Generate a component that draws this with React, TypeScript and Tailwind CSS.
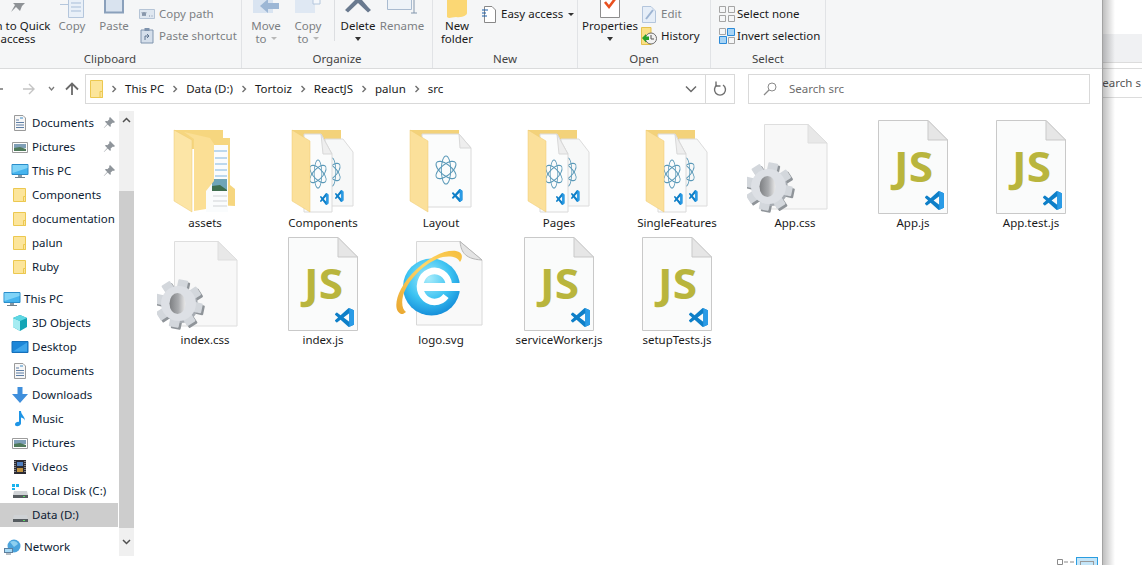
import type { ReactNode } from "react";

const VSCODE =
  "M23.15 2.587L18.21.21a1.494 1.494 0 0 0-1.705.29l-9.46 8.63-4.12-3.128a.999.999 0 0 0-1.276.057L.327 7.261A1 1 0 0 0 .326 8.74L3.899 12 .326 15.26a1 1 0 0 0 .001 1.479L1.65 17.94a.999.999 0 0 0 1.276.057l4.12-3.128 9.46 8.63a1.492 1.492 0 0 0 1.704.29l4.942-2.377A1.5 1.5 0 0 0 24 20.06V3.939a1.5 1.5 0 0 0-.85-1.352zm-5.146 14.861L10.826 12l7.178-5.448v10.896z";

// --- big icons, all drawn on a 96x96 canvas ---

function VsLogo({ x, y, size, sx = 1 }: { x: number; y: number; size: number; sx?: number }) {
  return (
    <g transform={`translate(${x} ${y}) scale(${(size / 24) * sx} ${size / 24})`}>
      <path d={VSCODE} fill="#0e7fc8" />
      <path d="M18 0.2L18.2 0.2L23.15 2.587A1.5 1.5 0 0 1 24 3.94V20.06a1.5 1.5 0 0 1-.85 1.352L18.2 23.8L18 23.8V17.4V6.6z" fill="#2a9be6" />
    </g>
  );
}

function Page({ x, y, w, h, fold }: { x: number; y: number; w: number; h: number; fold: number }) {
  const r = x + w;
  const b = y + h;
  return (
    <g>
      <path d={`M${x + 0.5} ${y + 0.5}H${r - fold}L${r - 0.5} ${y + fold}V${b - 0.5}H${x + 0.5}z`} fill="#fafbfb" stroke="#c9c9c9" />
      <path d={`M${r - fold} ${y + 0.5}V${y + fold}H${r - 0.5}z`} fill="#e6e6e6" stroke="#c9c9c9" />
    </g>
  );
}

function Atom({ x, y, r, sx }: { x: number; y: number; r: number; sx: number }) {
  return (
    <g fill="none" stroke="#5a99b8" strokeWidth="1.2" transform={`translate(${x} ${y}) scale(${sx} 1)`}>
      <ellipse rx={r * 0.42} ry={r} />
      <ellipse rx={r * 0.42} ry={r} transform="rotate(60)" />
      <ellipse rx={r * 0.42} ry={r} transform="rotate(120)" />
    </g>
  );
}

function Canvas({ children }: { children: ReactNode }) {
  return (
    <svg width="96" height="96" viewBox="0 0 96 96" className="shrink-0">
      {children}
    </svg>
  );
}

function FolderBack() {
  return <path d="M17 11H66V30H17z" fill="#f3d27a" />;
}

function FolderFlap() {
  return <path d="M17 11L35 22V93L17 82z" fill="#fbe09a" stroke="#efcb72" strokeWidth="0.5" />;
}

function AssetsFolder() {
  return (
    <Canvas>
      <path d="M17 11H66V19H73V66L78 70V87L58 86V30H17z" fill="#f6d67f" />
      <path d="M49 26H71V93H49z" fill="#fafcfd" />
      <g stroke="#7fb4de" strokeWidth="1">
        <path d="M56 32H70M58 39H70M58 45H70M58 51H70M58 57H70" />
      </g>
      <path d="M55 60H70V72H55z" fill="#6fa5b8" />
      <path d="M55 67L63 66L70 71V72H55z" fill="#3f6f4f" />
      <g stroke="#d0d3d6" strokeWidth="1">
        <path d="M56 77H70M56 82H70M56 87H70" />
      </g>
      <path d="M27 13L53 19L57 25V62L49 72V90L37 92V20z" fill="#fbdf95" />
      <path d="M17 11L35 21V93L17 82z" fill="#fce5a6" stroke="#efcb72" strokeWidth="0.5" />
    </Canvas>
  );
}

function TwoPageFolder() {
  return (
    <Canvas>
      <FolderBack />
      <path d="M50 20H68L78 33V87H50z" fill="#f7f8f8" stroke="#dcdcdc" />
      <Atom x={57} y={53} r={14} sx={0.65} />
      <VsLogo x={60} y={71} size={12} sx={0.7} />
      <path d="M29 15H46L57 35V93H29z" fill="#fbfcfc" stroke="#dadada" />
      <path d="M46 15L48 35H57z" fill="#eeeeee" stroke="#d8d8d8" />
      <Atom x={43} y={55} r={14} sx={0.65} />
      <VsLogo x={45} y={74} size={12} sx={0.7} />
      <FolderFlap />
    </Canvas>
  );
}

function OnePageFolder() {
  return (
    <Canvas>
      <FolderBack />
      <path d="M29 15H66L78 29V88H29z" fill="#fbfcfc" stroke="#dadada" />
      <path d="M66 15L67 29H78z" fill="#eeeeee" stroke="#d8d8d8" />
      <Atom x={53} y={51} r={14} sx={0.8} />
      <VsLogo x={59} y={70} size={13} sx={0.8} />
      <FolderFlap />
    </Canvas>
  );
}

function JsFile() {
  return (
    <Canvas>
      <Page x={13} y={1} w={70} h={94} fold={20} />
      <text x={29} y={63} fontFamily="'Open Sans', sans-serif" fontWeight="700" fontSize="41" fill="#b9b53d" textLength={39} lengthAdjust="spacingAndGlyphs">
        JS
      </text>
      <VsLogo x={60} y={72} size={19} />
    </Canvas>
  );
}

function CssFile() {
  const teeth = [0, 45, 90, 135, 180, 225, 270, 315];
  return (
    <Canvas>
      <defs>
        <linearGradient id="gearhole" x1="0" y1="0" x2="1" y2="0">
          <stop offset="0" stopColor="#7d7f82" />
          <stop offset="0.55" stopColor="#a8aaad" />
          <stop offset="1" stopColor="#e9e9e9" />
        </linearGradient>
      </defs>
      <path d="M17.5 5.5H61L80 24V90H17.5z" fill="#f8f8f8" stroke="#dedede" />
      <path d="M61 5.5V24H80z" fill="#e8e8e8" stroke="#dedede" />
      <g transform="translate(23.5 69.5)">
        {teeth.map((a) => (
          <rect key={a} x="-5" y="-24" width="10" height="12" rx="1" fill="#8f9499" transform={`rotate(${a + 12})`} />
        ))}
        <circle r="17.5" fill="#a6abb1" />
      </g>
      <g transform="translate(21.5 67.5)">
        {teeth.map((a) => (
          <rect key={a} x="-5" y="-24" width="10" height="12" rx="1" fill="#d3d7dc" transform={`rotate(${a + 12})`} />
        ))}
        <circle r="17.5" fill="#dde0e5" />
        <ellipse cx="-1" cy="0" rx="8" ry="10.5" fill="url(#gearhole)" />
      </g>
    </Canvas>
  );
}

function IeFile() {
  return (
    <Canvas>
      <defs>
        <radialGradient id="iebl" cx="45%" cy="35%" r="70%">
          <stop offset="0" stopColor="#a8ecfb" />
          <stop offset="0.55" stopColor="#3cc3f2" />
          <stop offset="1" stopColor="#0f86d6" />
        </radialGradient>
        <linearGradient id="ieor" x1="0" y1="1" x2="1" y2="0">
          <stop offset="0" stopColor="#e9a62e" />
          <stop offset="0.6" stopColor="#ffd76a" />
          <stop offset="1" stopColor="#f5bd3a" />
        </linearGradient>
      </defs>
      <path d="M23.5 5.5H67L89 24V89H23.5z" fill="#f9f9f9" stroke="#d8d8d8" />
      <path d="M67 5.5C68 14 70 23 89 24z" fill="#e4e4e4" stroke="#b5b5b5" />
      <circle cx="38.5" cy="51" r="28.5" fill="url(#iebl)" />
      <path d="M56 49A14.5 15.5 0 1 0 53 60" fill="none" stroke="#ffffff" strokeWidth="6.5" />
      <path d="M28 47H67V55H28z" fill="#ffffff" />
      <path d="M10 78C2 78 1 66 8 53C18 34 44 13 63 15C70 16 70 22 67 26C64 20 54 19 44 23C28 30 14 46 10 60C8 68 10 74 13 76z" fill="url(#ieor)" />
    </Canvas>
  );
}

const files: { name: string; icon: ReactNode }[] = [
  { name: "assets", icon: <AssetsFolder /> },
  { name: "Components", icon: <TwoPageFolder /> },
  { name: "Layout", icon: <OnePageFolder /> },
  { name: "Pages", icon: <TwoPageFolder /> },
  { name: "SingleFeatures", icon: <TwoPageFolder /> },
  { name: "App.css", icon: <CssFile /> },
  { name: "App.js", icon: <JsFile /> },
  { name: "App.test.js", icon: <JsFile /> },
  { name: "index.css", icon: <CssFile /> },
  { name: "index.js", icon: <JsFile /> },
  { name: "logo.svg", icon: <IeFile /> },
  { name: "serviceWorker.js", icon: <JsFile /> },
  { name: "setupTests.js", icon: <JsFile /> },
];

// --- sidebar icons, 18x16 ---

function Small({ children }: { children: ReactNode }) {
  return (
    <svg width="18" height="16" viewBox="0 0 18 16" className="shrink-0">
      {children}
    </svg>
  );
}

const FolderIcon = () => (
  <Small>
    <path d="M2.5 1.5H14.5V14.5H2.5z" fill="#fce59b" stroke="#ecc850" />
    <path d="M12.5 9.5H14.5V14.5H12.5z" fill="#fce59b" stroke="#ecc850" />
  </Small>
);
const DocIcon = () => (
  <Small>
    <path d="M3.5 .5H12L14.5 3V15.5H3.5z" fill="#f7f7f7" stroke="#9a9a9a" />
    <path d="M5 5H8M5 7.5H13M5 10H13M5 12.5H13" stroke="#5f7fa5" />
    <path d="M9 3H12" stroke="#3d8cc9" />
  </Small>
);
const PicIcon = () => (
  <Small>
    <path d="M1.5 3.5H16.5V13.5H1.5z" fill="#fff" stroke="#9c9c9c" />
    <path d="M3 5H15V9H3z" fill="#7f9fb7" />
    <path d="M3 9L9 8L15 10V12H3z" fill="#4f7a5a" />
  </Small>
);
const PcIcon = () => (
  <Small>
    <path d="M1 1.5H17V11.5H1z" fill="#46b4ee" stroke="#2a8dc9" />
    <path d="M1.5 2H16.5V5L1.5 10z" fill="#7fd3f7" />
    <path d="M7 12H11V14H7z" fill="#8a9aa5" />
    <path d="M4 14H14V15H4z" fill="#6f7f8a" />
  </Small>
);
const CubeIcon = () => (
  <Small>
    <path d="M9 0L16 3V12L9 16L2 12V3z" fill="#14a5b5" />
    <path d="M2 3L9 6V16L2 12z" fill="#a5ecf2" />
    <path d="M9 0L16 3L9 6L2 3z" fill="#5fd7e3" />
  </Small>
);
const DesktopIcon = () => (
  <Small>
    <path d="M1 2.5H17V13.5H1z" fill="#1c86d8" stroke="#1670ba" />
    <path d="M2 12.5L16 3.5V12.5z" fill="#3ea5ea" />
  </Small>
);
const DownloadIcon = () => (
  <Small>
    <path d="M6.5 0H11.5V7H17L9 16L1 7H6.5z" fill="#3f8fdc" />
  </Small>
);
const MusicIcon = () => (
  <Small>
    <path d="M8 0H10C10 4 14 5 14 10C14 8 12 7 10 6.5V12.5C10 15 4 16.5 4 13.5C4 11.5 6.5 10.5 8 11z" fill="#1e95e6" />
  </Small>
);
const VideoIcon = () => (
  <Small>
    <path d="M3 1H15V15H3z" fill="#2b2b33" />
    <path d="M6 3H12V7H6z" fill="#4f7fc0" />
    <path d="M6 9H12V13H6z" fill="#c0923f" />
    <path d="M4 2V14M14 2V14" stroke="#d8d8d8" strokeDasharray="1 1" />
  </Small>
);
const DiskCIcon = () => (
  <Small>
    <path d="M1 1H4V4H1zM5 1H8V4H5zM1 5H4V7H1z" fill="#19b3ee" />
    <path d="M3 8H16L17 12H2z" fill="#d0d3d6" />
    <path d="M2 12H17V15H2z" fill="#565c60" />
    <path d="M12 13H14V14H12z" fill="#58e060" />
  </Small>
);
const DiskDIcon = () => (
  <Small>
    <path d="M3 8H16L17 12H2z" fill="#cfd2d5" />
    <path d="M2 12H17V15H2z" fill="#565c60" />
    <path d="M12 13H14V14H12z" fill="#58e060" />
  </Small>
);
const NetworkIcon = () => (
  <Small>
    <circle cx="11" cy="7" r="6.5" fill="#4aa3dc" />
    <path d="M7 3C10 1 14 2 15 5L11 8z" fill="#8ed0f0" />
    <path d="M1 9H10V14H1z" fill="#5c7f9f" />
    <path d="M2 10H9V13H2z" fill="#a5d9f5" />
    <path d="M3 15H8" stroke="#6f7f8a" />
  </Small>
);
const PinIcon = () => (
  <svg width="12" height="12" viewBox="0 0 12 12" className="shrink-0">
    <path d="M7 0L12 5L10.8 6L10 5.4L7.6 7.6C8 8.6 7.8 9.5 7.2 10L4.6 7.4L1 11L.8 10.8L4.2 7L1.8 4.6C2.4 4 3.4 3.8 4.4 4.2L6.6 2L6 1.2z" fill="#8f959b" />
  </svg>
);

type Row = { label: string; icon: ReactNode; top?: boolean; pin?: boolean; active?: boolean; gap?: boolean };

const rows: Row[] = [
  { label: "Documents", icon: <DocIcon />, pin: true },
  { label: "Pictures", icon: <PicIcon />, pin: true },
  { label: "This PC", icon: <PcIcon />, pin: true },
  { label: "Components", icon: <FolderIcon /> },
  { label: "documentation", icon: <FolderIcon /> },
  { label: "palun", icon: <FolderIcon /> },
  { label: "Ruby", icon: <FolderIcon /> },
  { label: "This PC", icon: <PcIcon />, top: true, gap: true },
  { label: "3D Objects", icon: <CubeIcon /> },
  { label: "Desktop", icon: <DesktopIcon /> },
  { label: "Documents", icon: <DocIcon /> },
  { label: "Downloads", icon: <DownloadIcon /> },
  { label: "Music", icon: <MusicIcon /> },
  { label: "Pictures", icon: <PicIcon /> },
  { label: "Videos", icon: <VideoIcon /> },
  { label: "Local Disk (C:)", icon: <DiskCIcon /> },
  { label: "Data (D:)", icon: <DiskDIcon />, active: true },
  { label: "Network", icon: <NetworkIcon />, top: true, gap: true },
];

function SidebarRow({ row }: { row: Row }) {
  return (
    <div
      className={`flex h-6 shrink-0 items-center whitespace-nowrap ${row.gap ? "mt-2" : ""} ${row.active ? "bg-[#cdcdcd]" : ""} ${row.top ? "pl-[3px]" : "pl-[11px]"}`}
    >
      <span className="mr-[3px] flex">{row.icon}</span>
      <span className="text-[#0c1b33]">{row.label}</span>
      {row.pin && (
        <span className="ml-auto mr-[3px] flex">
          <PinIcon />
        </span>
      )}
    </div>
  );
}

// --- ribbon ---

function BigButton({ width, icon, lines, dim, caret }: { width: number; icon?: ReactNode; lines: string[]; dim?: boolean; caret?: "dark" | "light" }) {
  return (
    <div className="flex shrink-0 flex-col items-center whitespace-nowrap leading-[13px]" style={{ width }}>
      <div className="flex h-[19px] items-end">{icon}</div>
      {lines.map((l, i) => (
        <div key={i} className={`flex items-center ${dim ? "text-[#7c7f83]" : "text-[#1a1a1a]"}`}>
          {l}
          {caret === "light" && i === lines.length - 1 && <span className="ml-1 border-x-[3px] border-t-[3px] border-x-transparent border-t-[#b8b8b8]" />}
        </div>
      ))}
      {caret === "dark" && <span className="mt-[5px] border-x-[3.5px] border-t-[4px] border-x-transparent border-t-[#333]" />}
    </div>
  );
}

function SmallButton({ icon, label, dim, caret, tight }: { icon: ReactNode; label: string; dim?: boolean; caret?: boolean; tight?: boolean }) {
  return (
    <div className={`flex h-[22px] items-center whitespace-nowrap ${dim ? "text-[#7c7f83]" : "text-[#1a1a1a]"}`}>
      <span className={`flex w-[16px] justify-center ${tight ? "mr-[2px]" : "mr-1"}`}>{icon}</span>
      {label}
      {caret && <span className="ml-[5px] border-x-[3px] border-t-[3px] border-x-transparent border-t-[#333]" />}
    </div>
  );
}

function Group({ width, label, className, children }: { width: number; label: string; className?: string; children: ReactNode }) {
  return (
    <div className={`flex shrink-0 flex-col border-r border-[#e1e3e6] ${className ?? ""}`} style={{ width }}>
      <div className="flex h-[52px]">{children}</div>
      <div className="text-center leading-[14px] text-[#444]">{label}</div>
    </div>
  );
}

const Tall = ({ w, h, children }: { w: number; h: number; children: ReactNode }) => (
  <svg width={w} height={h} viewBox={`0 0 ${w} ${h}`} className="shrink-0">
    {children}
  </svg>
);

function Chevron() {
  return (
    <svg width="22" height="10" viewBox="0 0 22 10" className="shrink-0">
      <path d="M9.5 2L12.5 5L9.5 8" fill="none" stroke="#6f6f6f" strokeWidth="1.4" />
    </svg>
  );
}

export default function App() {
  return (
    <div
      className="flex h-[565px] w-[1142px] overflow-hidden bg-white text-[11.5px] leading-4"
      style={{ fontFamily: "'Noto Sans', 'Open Sans', sans-serif" }}
    >
      {/* explorer window */}
      <div className="flex h-full w-[1103px] shrink-0 flex-col border-r border-[#a3a3a3]">
        <div className="flex h-[69px] shrink-0 overflow-hidden border-b border-[#dadbdc] bg-[#f5f6f7]">
          <Group width={263} label="Clipboard" className="ml-[-21px]">
            <div className="flex items-start">
              <BigButton
                width={78}
                lines={["Pin to Quick", "access"]}
                icon={
                  <Tall w={18} h={16}>
                    <path d="M12 0L18 4L13 9L11 14L7 10L2 15L6 8L3 5L8 5z" fill="#8e9296" transform="translate(0 -6)" />
                  </Tall>
                }
              />
              <BigButton
                width={30}
                dim
                lines={["Copy"]}
                icon={
                  <Tall w={24} h={20}>
                    <path d="M8.5 0V18.5H23.5V0z" fill="#e9f0f8" stroke="#b4c6dc" />
                    <path d="M0 5.5H8" stroke="#b4c6dc" />
                    <path d="M11 4H21M11 8H21M11 12H21" stroke="#a7bdd8" />
                  </Tall>
                }
              />
              <BigButton
                width={54}
                dim
                lines={["Paste"]}
                icon={
                  <Tall w={20} h={20}>
                    <path d="M1 0H19V13.5H1z" fill="#d9e3ef" stroke="#8aa0bb" strokeWidth="2" />
                  </Tall>
                }
              />
            </div>
            <div className="ml-[-2px] flex flex-col pt-[3px]">
              <SmallButton
                dim
                label="Copy path"
                icon={
                  <Tall w={16} h={10}>
                    <path d="M.5 .5H15.5V9.5H.5z" fill="#dfe7f0" stroke="#b5c4d6" />
                    <path d="M3 3L4 7L5 3L6 7L7 3M10 7H11M12.5 7H13.5" fill="none" stroke="#687a92" strokeWidth=".8" />
                  </Tall>
                }
              />
              <SmallButton
                dim
                label="Paste shortcut"
                icon={
                  <Tall w={14} h={16}>
                    <path d="M1 2H13V15H1z" fill="#d5dfeb" stroke="#7e93ad" />
                    <path d="M4.5 0H9.5V3H4.5z" fill="#7e93ad" />
                    <path d="M5 12V8H8M7 6L9 8L7 10" fill="none" stroke="#5f7590" />
                  </Tall>
                }
              />
            </div>
          </Group>
          <Group width={191} label="Organize">
            <div className="flex">
              <BigButton
                width={48}
                dim
                caret="light"
                lines={["Move", "to"]}
                icon={
                  <Tall w={26} h={20}>
                    <path d="M0 0H20V14H0z" fill="#d9e4f1" />
                    <path d="M26 4H15V0L7 7L15 14V10H26z" fill="#9db7d5" />
                  </Tall>
                }
              />
              <BigButton
                width={36}
                dim
                caret="light"
                lines={["Copy", "to"]}
                icon={
                  <Tall w={26} h={20}>
                    <path d="M0 0H20V14H0z" fill="#dfe8f3" />
                    <path d="M18 0H25V5H18z" fill="#f4f7fb" stroke="#b4c6dc" />
                  </Tall>
                }
              />
            </div>
            <div className="mb-[11px] ml-2 w-px bg-[#dcdee1]" />
            <BigButton
              width={46}
              caret="dark"
              lines={["Delete"]}
              icon={
                <Tall w={26} h={20}>
                  <path d="M13 0L3 10L0 13L3 15.5L13 6L23 15.5L26 13L23 10L17 3L15 0z" fill="#6a7a8f" transform="translate(0 -2)" />
                </Tall>
              }
            />
            <BigButton
              width={42}
              dim
              lines={["Rename"]}
              icon={
                <Tall w={30} h={20}>
                  <path d="M.5 0V10.5H24.5V0z" fill="#eef3f8" stroke="#a9bbd0" />
                  <path d="M27 0V14M24 0H30M24 14H30" stroke="#8296ad" fill="none" />
                </Tall>
              }
            />
          </Group>
          <Group width={145} label="New">
            <BigButton
              width={48}
              lines={["New", "folder"]}
              icon={
                <Tall w={20} h={20}>
                  <path d="M0 0H20V14C20 16 16 19 9 18C5 18 2 20 0 18z" fill="#fbd774" />
                </Tall>
              }
            />
            <div className="pt-[3px]">
              <SmallButton
                label="Easy access"
                caret
                icon={
                  <Tall w={16} h={17}>
                    <path d="M3.5 .5H11L14.5 4V16.5H3.5z" fill="#fff" stroke="#888" />
                    <path d="M1 4H7M1 7H5M1 10H6" stroke="#1d5fa8" />
                  </Tall>
                }
              />
            </div>
          </Group>
          <Group width={133} label="Open">
            <BigButton
              width={64}
              caret="dark"
              lines={["Properties"]}
              icon={
                <Tall w={20} h={20}>
                  <path d="M.5 0V18.5H19.5V0z" fill="#fff" stroke="#8d8d8d" />
                  <path d="M5 3L9 8L15 0" fill="none" stroke="#e8501f" strokeWidth="2.6" />
                </Tall>
              }
            />
            <div className="-ml-[1px] flex flex-col pt-[3px]">
              <SmallButton
                dim
                label="Edit"
                icon={
                  <Tall w={14} h={17}>
                    <path d="M.5 .5H9L13.5 5V16.5H.5z" fill="#e6eef8" stroke="#b3c5dc" />
                    <path d="M4 13L11 4" stroke="#9db4d2" strokeWidth="2" />
                  </Tall>
                }
              />
              <SmallButton
                label="History"
                icon={
                  <Tall w={16} h={18}>
                    <path d="M.5 .5H10V17.5H.5z" fill="#fbe086" stroke="#e5c14c" />
                    <circle cx="10" cy="11.5" r="5.5" fill="#f2f2f2" stroke="#6d6d6d" />
                    <path d="M10 8V12H13" fill="none" stroke="#555" />
                    <path d="M1 11L5 7V9.5H8V13H5V15.5z" fill="#2aa02a" />
                  </Tall>
                }
              />
            </div>
          </Group>
          <Group width={115} label="Select">
            <div className="flex flex-col pl-2 pt-[3px]">
              <SmallButton
                tight
                label="Select none"
                icon={
                  <Tall w={16} h={16}>
                    <path d="M.5 .5H6.5V6.5H.5zM9.5 .5H15.5V6.5H9.5zM.5 9.5H6.5V15.5H.5zM9.5 9.5H15.5V15.5H9.5z" fill="none" stroke="#a5a5a5" />
                  </Tall>
                }
              />
              <SmallButton
                tight
                label="Invert selection"
                icon={
                  <Tall w={16} h={16}>
                    <path d="M.5 .5H6.5V6.5H.5zM9.5 9.5H15.5V15.5H9.5z" fill="none" stroke="#a5a5a5" />
                    <path d="M8.5 .5H15.5V7.5H8.5zM.5 8.5H7.5V15.5H.5z" fill="#a8d4f5" stroke="#2b8ad8" />
                  </Tall>
                }
              />
            </div>
          </Group>
        </div>

        {/* address bar */}
        <div className="flex h-10 shrink-0 items-start pt-[5px]">
          <div className="flex h-[30px] w-[85px] shrink-0 items-center">
            <svg width="85" height="16" viewBox="0 0 85 16">
              <path d="M-6 8H3" stroke="#6a6a6a" strokeWidth="1.4" />
              <path d="M23 8H34M29 3L34 8L29 13" fill="none" stroke="#c4c4c4" strokeWidth="1.4" />
              <path d="M49 6L51.5 9L54 6" fill="none" stroke="#7a7a7a" strokeWidth="1.3" />
              <path d="M72 14V3M66 8.5L72 2.5L78 8.5" fill="none" stroke="#6a6a6a" strokeWidth="1.8" />
            </svg>
          </div>
          <div className="flex h-[30px] w-[650px] shrink-0 items-center border border-[#d9d9d9] pl-[4px] text-[#1a1a1a]">
            <svg width="13" height="18" viewBox="0 0 13 18" className="shrink-0">
              <path d="M.5 .5H12.5V17.5H.5z" fill="#fce59b" stroke="#ecc850" />
              <path d="M10 11.5H12.5V17.5H10z" fill="#fce59b" stroke="#ecc850" />
            </svg>
            <Chevron />
            This PC
            <Chevron />
            Data (D:)
            <Chevron />
            Tortoiz
            <Chevron />
            ReactJS
            <Chevron />
            palun
            <Chevron />
            src
            <div className="ml-auto flex h-full w-[29px] items-center justify-center">
              <svg width="12" height="8" viewBox="0 0 12 8">
                <path d="M1 1.5L6 6.5L11 1.5" fill="none" stroke="#6a6a6a" strokeWidth="1.5" />
              </svg>
            </div>
            <div className="flex h-full w-[29px] items-center justify-center border-l border-[#d9d9d9]">
              <svg width="14" height="16" viewBox="0 0 14 16">
                <path d="M4 4A5.5 5.5 0 1 0 10 4" fill="none" stroke="#6f6f6f" strokeWidth="1.4" />
                <path d="M3 0.5V5H7.5" fill="none" stroke="#6f6f6f" strokeWidth="1.4" />
              </svg>
            </div>
          </div>
          <div className="ml-[13px] flex h-[30px] w-[342px] shrink-0 items-center border border-[#d9d9d9] pl-[14px] text-[#6d6d6d]">
            <svg width="14" height="14" viewBox="0 0 14 14" className="mr-[12px] shrink-0">
              <circle cx="9" cy="5" r="4" fill="none" stroke="#8a8a8a" />
              <path d="M6 8L1 13" stroke="#8a8a8a" strokeWidth="1.2" />
            </svg>
            Search src
          </div>
        </div>

        <div className="flex min-h-0 flex-1">
          {/* navigation pane */}
          <div className="flex w-[118px] shrink-0 flex-col overflow-hidden pt-[2px]">
            {rows.map((row, i) => (
              <SidebarRow key={i} row={row} />
            ))}
          </div>
          <div className="ml-px mt-[2px] flex h-[445px] w-[15px] shrink-0 flex-col bg-[#f0f0f0]">
            <div className="flex h-[17px] items-center justify-center">
              <svg width="9" height="6" viewBox="0 0 9 6">
                <path d="M1 5L4.5 1.5L8 5" fill="none" stroke="#505050" strokeWidth="1.5" />
              </svg>
            </div>
            <div className="mt-[63px] h-[337px] bg-[#cdcdcd]" />
            <div className="flex flex-1 items-center justify-center">
              <svg width="9" height="6" viewBox="0 0 9 6">
                <path d="M1 1L4.5 4.5L8 1" fill="none" stroke="#505050" strokeWidth="1.5" />
              </svg>
            </div>
          </div>

          {/* files */}
          <div className="flex min-w-0 flex-1 flex-col">
            <div className="grid flex-1 grid-cols-[repeat(8,118px)] content-start pl-3 pt-[10px]">
              {files.map((f) => (
                <div key={f.name} className="flex h-[117px] flex-col items-center">
                  {f.icon}
                  <div className="whitespace-nowrap text-[#1a1a1a]">{f.name}</div>
                </div>
              ))}
            </div>
            <div className="flex h-2 shrink-0 items-start justify-end pr-1">
              <svg width="18" height="8" viewBox="0 0 18 8" className="mr-px mt-[2px]">
                <path d="M.5 .5H5.5V5.5H.5z" fill="none" stroke="#8a8a8a" />
                <path d="M7 3H11M13 3H17" stroke="#8a8a8a" />
              </svg>
              <div className="flex h-2 w-[22px] justify-center border-x border-t border-[#2a9de0] bg-[#c4e5f8] pt-[3px]">
                <div className="h-[5px] w-[14px] border-x border-t border-[#9a9a9a]" />
              </div>
            </div>
          </div>
        </div>
      </div>

      {/* window behind, with the drop shadow laid over it */}
      <div className="relative min-w-0 flex-1 overflow-hidden">
        <div className="mt-[34px] h-[29px] border-b border-[#dcdcdc] bg-[#f0f1f3]" />
        <div className="mt-[5px] flex h-[30px] items-center whitespace-nowrap border-y border-[#dcdcdc] text-[#555]">
          <span className="-ml-[7px]">Search s</span>
        </div>
        <div className="absolute inset-y-0 left-0 w-3 bg-gradient-to-r from-[#00000040] to-transparent" />
      </div>
    </div>
  );
}
